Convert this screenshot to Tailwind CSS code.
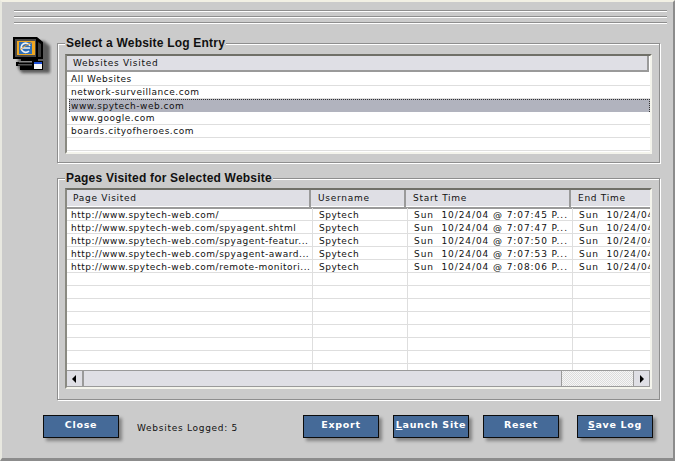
<!DOCTYPE html>
<html><head><meta charset="utf-8"><script src="https://cdn.jsdelivr.net/npm/@tailwindcss/browser@4"></script></head>
<body class="m-0 bg-[#cbcbcb]">
<div class="w-[675px] h-[461px] overflow-hidden bg-[#cbcbcb] border-t-2 border-l-2 border-t-[#f2f0e4] border-l-[#e8e8e0] border-r-2 border-b-3 border-r-[#8c8c8c] border-b-[#8c8c8c] font-['DejaVu_Sans',sans-serif] text-[9px] leading-[13px] text-[#111] flex flex-col">
  <div class="pt-[8px] pl-[12px] pr-[6px] flex flex-col gap-[4px]">
    <div class="h-[2px] border-t border-t-[#8e8e8e] border-b border-b-white"></div>
    <div class="h-[2px] border-t border-t-[#8e8e8e] border-b border-b-white"></div>
    <div class="h-[2px] border-t border-t-[#8e8e8e] border-b border-b-white"></div>
  </div>
  <div class="flex pl-[10px] mt-[19px]">
    <div class="w-[45px] shrink-0 -mt-[6px]">
      <svg width="40" height="40" viewBox="0 0 40 40">
        <defs><filter id="b" x="-20%" y="-20%" width="150%" height="150%"><feGaussianBlur stdDeviation="1.6"/></filter></defs>
        <path d="M6 4H32L38 9V36H10L6 31Z" fill="#5a5a5a" filter="url(#b)"/>
        <path d="M1 0H25L31 5V22H26V24H31V33H8V29H4V25H9V22H1Z" fill="#000"/>
        <rect x="3" y="2" width="21" height="18" fill="#4a4a4a"/>
        <rect x="5" y="4" width="18" height="14" fill="#f0a822"/>
        <rect x="7" y="5" width="13" height="12" fill="#2f6fb8"/>
        <path d="M26 5L29 7V20H26Z" fill="#3c3c3c"/>
        <path d="M9.5 11H18M18 9A4.6 4.6 0 1 0 17 14" fill="none" stroke="#eef2f4" stroke-width="1.6"/>
        <path d="M8 13C12 9 17 7 21 5" fill="none" stroke="#e8a030" stroke-width="1"/>
        <rect x="7" y="24" width="13" height="1.5" fill="#8a8a8a"/>
        <rect x="6" y="27" width="14" height="1.5" fill="#555"/>
        <rect x="22" y="25" width="8" height="2" fill="#1d4fd8"/>
        <rect x="22" y="27" width="8" height="5" fill="#f4f4f4"/>
      </svg>
    </div>
    <div class="w-[603px] flex flex-col gap-[15px]">
      <section class="relative h-[120px] border border-[#8e8e8e] shadow-[inset_1px_1px_0_#fff,1px_1px_0_#fff] px-[7px] pt-[10px]">
        <h2 class="absolute left-[7px] -top-[7px] bg-[#cbcbcb] px-[1px] font-['Liberation_Sans',sans-serif] font-bold text-[12px] leading-[13px] text-[#111] tracking-[0.2px]">Select a Website Log Entry</h2>
        <div class="h-[100px] bg-white border-t-2 border-l-2 border-t-[#707068] border-l-[#8a8a82] border-r-2 border-b-2 border-r-[#f4f4ec] border-b-[#f4f4ec] overflow-hidden">
          <div class="h-[16px] bg-[#dfdfe5] border-b-2 border-r-2 border-[#9a9a9a] pl-[6px] leading-[14px] tracking-[0.72px] mr-[1px]">Websites Visited</div>
          <div class="tracking-[0.52px]">
            <div class="h-[13px] mt-[1px] border-b border-b-[#dedede] pl-[4px] leading-[13px]">All Websites</div>
            <div class="h-[13px] border-b border-b-[#dedede] pl-[4px]">network-surveillance.com</div>
            <div class="h-[13px] border-t border-l border-r border-dotted border-[#333] bg-[#b1b3be] ml-[2px] pl-[1px] leading-[12px]">www.spytech-web.com</div>
            <div class="h-[13px] border-b border-b-[#dedede] pl-[4px]">www.google.com</div>
            <div class="h-[13px] border-b border-b-[#dedede] pl-[4px]">boards.cityofheroes.com</div>
            <div class="h-[13px] border-b border-b-[#dedede]"></div>
          </div>
        </div>
      </section>
      <section class="relative h-[222px] border border-[#8e8e8e] shadow-[inset_1px_1px_0_#fff,1px_1px_0_#fff] px-[7px] pt-[9px]">
        <h2 class="absolute left-[7px] -top-[7px] bg-[#cbcbcb] px-[1px] font-['Liberation_Sans',sans-serif] font-bold text-[12px] leading-[13px] text-[#111] tracking-[0.2px]">Pages Visited for Selected Website</h2>
        <div class="h-[201px] bg-white border-t-2 border-l-2 border-t-[#707068] border-l-[#8a8a82] border-r-2 border-b-2 border-r-[#f4f4ec] border-b-[#f4f4ec] overflow-hidden flex flex-col tracking-[0.52px]">
          <div class="grid grid-cols-[244px_95px_165px_80px] h-[16px] bg-[#dfdfe5] leading-[17px] shrink-0 tracking-[0.72px]">
            <div class="border-r-2 border-b-2 border-[#9a9a9a] pl-[6px]">Page Visited</div>
            <div class="border-r-2 border-b-2 border-[#9a9a9a] pl-[7px]">Username</div>
            <div class="border-r-2 border-b-2 border-[#9a9a9a] pl-[7px]">Start Time</div>
            <div class="border-b-2 border-[#9a9a9a] pl-[7px] whitespace-nowrap">End Time</div>
          </div>
          <div class="flex-1 min-h-0 pt-[2px] overflow-hidden">
            <div class="grid grid-cols-[246px_95px_165px_78px] auto-rows-[13px] leading-[15px] whitespace-nowrap [&>div]:border-b [&>div]:border-r [&>div]:border-[#dedede] [&>div]:overflow-hidden [&>div]:pl-[6px] [&>div:nth-child(4n+3)]:tracking-[0.92px] [&>div:nth-child(4n)]:tracking-[0.92px]">
              <div class="!pl-[4px]">http://www.spytech-web.com/</div><div>Spytech</div><div>Sun&nbsp; 10/24/04 @ 7:07:45 P...</div><div>Sun&nbsp; 10/24/04</div>
              <div class="!pl-[4px]">http://www.spytech-web.com/spyagent.shtml</div><div>Spytech</div><div>Sun&nbsp; 10/24/04 @ 7:07:47 P...</div><div>Sun&nbsp; 10/24/04</div>
              <div class="!pl-[4px]">http://www.spytech-web.com/spyagent-featur...</div><div>Spytech</div><div>Sun&nbsp; 10/24/04 @ 7:07:50 P...</div><div>Sun&nbsp; 10/24/04</div>
              <div class="!pl-[4px]">http://www.spytech-web.com/spyagent-award...</div><div>Spytech</div><div>Sun&nbsp; 10/24/04 @ 7:07:53 P...</div><div>Sun&nbsp; 10/24/04</div>
              <div class="!pl-[4px]">http://www.spytech-web.com/remote-monitori...</div><div>Spytech</div><div>Sun&nbsp; 10/24/04 @ 7:08:06 P...</div><div>Sun&nbsp; 10/24/04</div>
              <div></div><div></div><div></div><div></div>
              <div></div><div></div><div></div><div></div>
              <div></div><div></div><div></div><div></div>
              <div></div><div></div><div></div><div></div>
              <div></div><div></div><div></div><div></div>
              <div></div><div></div><div></div><div></div>
              <div></div><div></div><div></div><div></div>
              <div></div><div></div><div></div><div></div>
            </div>
          </div>
          <div class="h-[17px] shrink-0 flex bg-[#dfdfe5] border-t border-b border-[#9a9a9a]">
            <div class="w-[17px] border-r-2 border-[#9a9a9a] flex items-center justify-center"><svg width="5" height="8" viewBox="0 0 5 8"><path d="M4 0V8L0 4Z" fill="#000"/></svg></div>
            <div class="w-[478px] border-r border-[#9a9a9a]"></div>
            <div class="flex-1 bg-[repeating-conic-gradient(#dcdcdc_0_25%,#f6f6f6_0_50%)] bg-[length:2px_2px]"></div>
            <div class="w-[17px] border-l border-r border-[#9a9a9a] flex items-center justify-center"><svg width="5" height="8" viewBox="0 0 5 8"><path d="M1 0V8L5 4Z" fill="#000"/></svg></div>
          </div>
        </div>
      </section>
    </div>
  </div>
  <div class="flex items-start pl-[41px] mt-[15px]">
    <button class="w-[76px] h-[23px] bg-[#456a98] border border-[#0c0c0c] shadow-[3px_3px_3px_#848484] text-white font-bold text-[9.5px] tracking-[0.7px] leading-[18px] pb-[4px]">Close</button>
    <div class="ml-[18px] mt-[7px] w-[166px] tracking-[0.72px]">Websites Logged: 5</div>
    <button class="w-[76px] h-[23px] bg-[#456a98] border border-[#0c0c0c] shadow-[3px_3px_3px_#848484] text-white font-bold text-[9.5px] tracking-[0.7px] leading-[18px] pb-[4px]">Export</button>
    <button class="ml-[14px] w-[76px] h-[23px] bg-[#456a98] border border-[#0c0c0c] shadow-[3px_3px_3px_#848484] text-white font-bold text-[9.5px] tracking-[0.7px] leading-[18px] pb-[4px] whitespace-nowrap"><u>L</u>aunch Site</button>
    <button class="ml-[14px] w-[76px] h-[23px] bg-[#456a98] border border-[#0c0c0c] shadow-[3px_3px_3px_#848484] text-white font-bold text-[9.5px] tracking-[0.7px] leading-[18px] pb-[4px]">Reset</button>
    <button class="ml-[18px] w-[76px] h-[23px] bg-[#456a98] border border-[#0c0c0c] shadow-[3px_3px_3px_#848484] text-white font-bold text-[9.5px] tracking-[0.7px] leading-[18px] pb-[4px]"><u>S</u>ave Log</button>
  </div>
</div>
</body></html>
